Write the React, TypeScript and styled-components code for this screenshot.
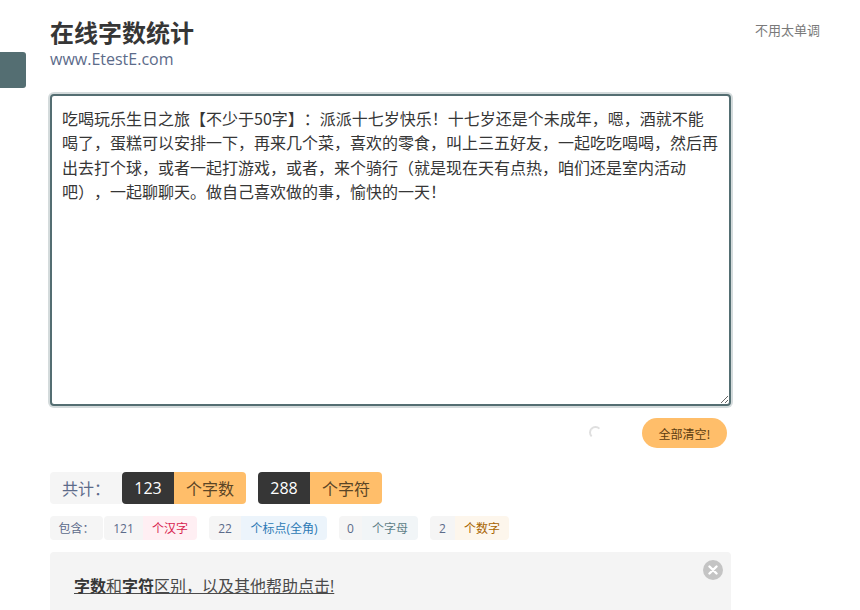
import React from 'react';
import styled, { createGlobalStyle } from 'styled-components';

const articleText =
  '吃喝玩乐生日之旅【不少于50字】：派派十七岁快乐！十七岁还是个未成年，嗯，酒就不能喝了，蛋糕可以安排一下，再来几个菜，喜欢的零食，叫上三五好友，一起吃吃喝喝，然后再出去打个球，或者一起打游戏，或者，来个骑行（就是现在天有点热，咱们还是室内活动吧），一起聊聊天。做自己喜欢做的事，愉快的一天！';

const details = [
  { count: 121, label: '个汉字', countWidth: 39, unitWidth: 54, bg: '#ffeff3', color: '#d81e50' },
  { count: 22, label: '个标点(全角)', countWidth: 32, unitWidth: 86, bg: '#ecf4fb', color: '#2d7ab5' },
  { count: 0, label: '个字母', countWidth: 23, unitWidth: 56, bg: '#f1f5f7', color: '#5f7f88' },
  { count: 2, label: '个数字', countWidth: 25, unitWidth: 54, bg: '#fdf6ec', color: '#a86400' },
];

const App: React.FC = () => {
  return (
    <Page>
      <GlobalStyle />
      <SideTab />
      <Main>
        <Title>在线字数统计</Title>
        <Subtitle>www.EtestE.com</Subtitle>
        <Editor defaultValue={articleText} spellCheck={false} />
        <Actions>
          <Spinner />
          <ClearButton>全部清空!</ClearButton>
        </Actions>
        <TotalRow>
          <TotalLabel>共计：</TotalLabel>
          <TotalGroup>
            <TotalCount>123</TotalCount>
            <TotalUnit>个字数</TotalUnit>
          </TotalGroup>
          <TotalGroup>
            <TotalCount>288</TotalCount>
            <TotalUnit>个字符</TotalUnit>
          </TotalGroup>
        </TotalRow>
        <DetailRow>
          <DetailLabel>包含：</DetailLabel>
          {details.map((item) => (
            <DetailGroup key={item.label}>
              <DetailCount $width={item.countWidth}>{item.count}</DetailCount>
              <DetailUnit $width={item.unitWidth} $bg={item.bg} $color={item.color}>
                {item.label}
              </DetailUnit>
            </DetailGroup>
          ))}
        </DetailRow>
        <Notice>
          <CloseButton>
            <svg width="10" height="10" viewBox="0 0 10 10">
              <path d="M1.5 1.5l7 7M8.5 1.5l-7 7" stroke="#fff" strokeWidth="2.4" strokeLinecap="round" />
            </svg>
          </CloseButton>
          <NoticeLink href="#">
            <strong>字数</strong>和<strong>字符</strong>区别，以及其他帮助点击!
          </NoticeLink>
        </Notice>
      </Main>
      <ThemeLink href="#">不用太单调</ThemeLink>
    </Page>
  );
};

const GlobalStyle = createGlobalStyle`
  html, body {
    margin: 0;
    height: 100%;
    overflow: hidden;
    background: #fff;
  }
  * {
    box-sizing: border-box;
  }
`;

const Page = styled.div`
  display: flex;
  align-items: flex-start;
  padding: 17px 0 0 50px;
  font-family: 'Open Sans', 'Noto Sans CJK SC', sans-serif;
  color: #363636;
  text-spacing-trim: space-all;
`;

const SideTab = styled.div`
  position: fixed;
  left: 0;
  top: 52px;
  width: 26px;
  height: 36px;
  background: #546e72;
  border-radius: 0 3px 3px 0;
`;

const Main = styled.div`
  display: flex;
  flex-direction: column;
  width: 681px;
  flex: none;
`;

const Title = styled.h1`
  margin: 0;
  font-size: 24px;
  line-height: 32px;
  font-weight: 700;
  color: #363636;
`;

const Subtitle = styled.div`
  font-size: 16px;
  line-height: 21px;
  color: #5c6b8a;
`;

const Editor = styled.textarea`
  display: block;
  width: 681px;
  height: 312px;
  margin-top: 24px;
  padding: 10px 10px;
  border: 2px solid #546e72;
  border-radius: 4px;
  box-shadow: 0 0 0 2px rgba(84, 110, 114, 0.25);
  outline: none;
  font-family: 'Noto Sans CJK SC', sans-serif;
  font-size: 16px;
  line-height: 24.3px;
  color: #363636;
  resize: vertical;
  text-spacing-trim: space-all;
`;

const Actions = styled.div`
  display: flex;
  align-items: center;
  justify-content: flex-end;
  gap: 40px;
  padding-right: 4px;
  margin-top: 12px;
`;

const Spinner = styled.span`
  width: 13px;
  height: 13px;
  margin-bottom: 2px;
  border: 2px solid transparent;
  border-top-color: #dfdfdf;
  border-left-color: #dfdfdf;
  border-radius: 50%;
`;

const ClearButton = styled.button`
  width: 85px;
  height: 30px;
  padding: 0;
  border: none;
  border-radius: 15px;
  background: #ffbe6a;
  font-family: 'Noto Sans CJK SC', sans-serif;
  font-size: 12px;
  color: #5c3c10;
`;

const TotalRow = styled.div`
  display: flex;
  gap: 12px;
  height: 32px;
  margin-top: 24px;
`;

const TotalLabel = styled.div`
  display: flex;
  align-items: center;
  width: 72px;
  margin-right: -12px;
  padding-left: 12px;
  background: #f5f5f5;
  border-radius: 4px 0 0 4px;
  font-size: 16px;
  color: #5c6b8a;
`;

const TotalGroup = styled.div`
  display: flex;
  border-radius: 4px;
  overflow: hidden;
  font-size: 16px;
`;

const TotalCount = styled.div`
  display: flex;
  align-items: center;
  justify-content: center;
  width: 52px;
  background: #363636;
  color: #fff;
`;

const TotalUnit = styled.div`
  display: flex;
  align-items: center;
  justify-content: center;
  width: 72px;
  background: #ffbe6a;
  color: #5a4526;
`;

const DetailRow = styled.div`
  display: flex;
  gap: 12px;
  height: 24px;
  margin-top: 12px;
  font-size: 12px;
`;

const DetailLabel = styled.div`
  display: flex;
  align-items: center;
  justify-content: center;
  width: 53px;
  margin-right: -11px;
  background: #f5f5f5;
  border-radius: 4px;
  color: #5c6b8a;
`;

const DetailGroup = styled.div`
  display: flex;
  border-radius: 4px;
  overflow: hidden;
`;

const DetailCount = styled.div<{ $width: number }>`
  display: flex;
  align-items: center;
  justify-content: center;
  width: ${(p) => p.$width}px;
  background: #f5f5f5;
  color: #5c6b8a;
`;

const DetailUnit = styled.div<{ $width: number; $bg: string; $color: string }>`
  display: flex;
  align-items: center;
  justify-content: center;
  width: ${(p) => p.$width}px;
  background: ${(p) => p.$bg};
  color: ${(p) => p.$color};
`;

const Notice = styled.div`
  position: relative;
  margin-top: 12px;
  padding: 23px 24px 24px;
  background: #f4f4f4;
  border-radius: 4px;
  font-size: 16px;
  line-height: 22px;
`;

const NoticeLink = styled.a`
  color: #4a4a4a;
  text-decoration: underline;

  strong {
    font-weight: 700;
    color: #363636;
  }
`;

const CloseButton = styled.span`
  position: absolute;
  top: 8px;
  right: 8px;
  display: flex;
  align-items: center;
  justify-content: center;
  width: 20px;
  height: 20px;
  border-radius: 50%;
  background: #c4c4c4;
`;

const ThemeLink = styled.a`
  margin: 4px 0 0 24px;
  font-family: 'Noto Sans CJK SC', sans-serif;
  font-size: 13px;
  line-height: 18px;
  color: #7a7a7a;
  text-decoration: none;
  white-space: nowrap;
`;

export default App;
